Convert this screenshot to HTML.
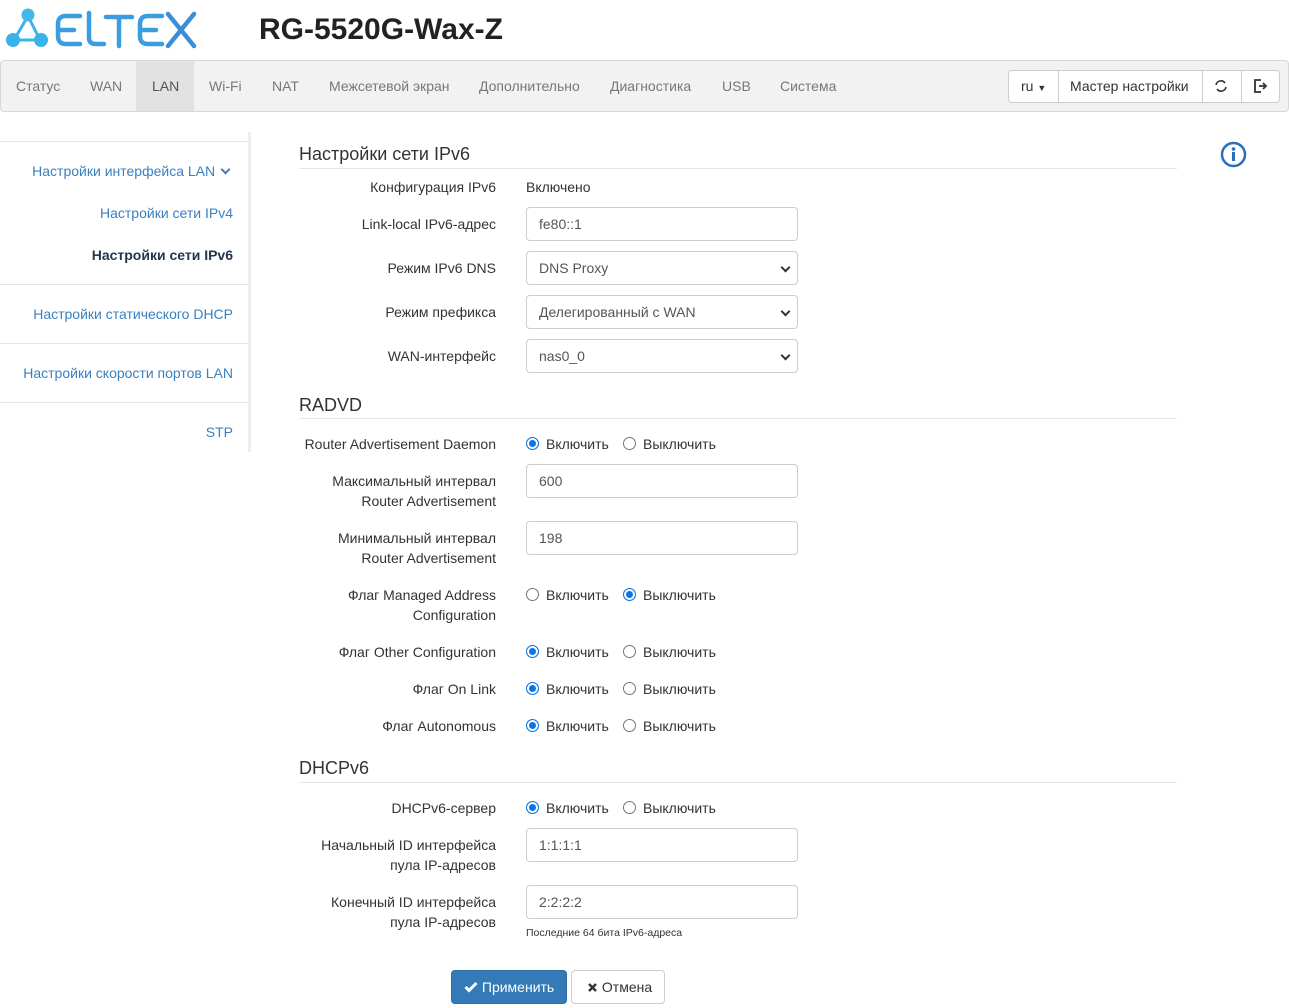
<!DOCTYPE html>
<html><head><meta charset="utf-8">
<style>
*{margin:0;padding:0;box-sizing:border-box}
body{width:1289px;height:1008px;background:#fff;font-family:"Liberation Sans",Arial,sans-serif;font-size:14px;color:#333;position:relative;overflow:hidden}
.a{position:absolute;white-space:nowrap}
.nav{position:absolute;left:0;top:60px;width:1289px;height:52px;background:#f2f2f2;border:1px solid #d8d8d8;border-radius:4px}
.ni{position:absolute;top:17px;color:#777;font-size:14px}
.lbl{position:absolute;right:793px;text-align:right;color:#333;line-height:20px}
.inp{position:absolute;left:526px;width:272px;height:34px;border:1px solid #ccc;border-radius:4px;padding:0 12px;line-height:32px;color:#555;background:#fff}
.sel::after{content:"";position:absolute;right:8px;top:12px;width:5px;height:5px;border-right:2px solid #333;border-bottom:2px solid #333;transform:rotate(45deg)}
.h{position:absolute;left:299px;font-size:18px;color:#333}
.hl{position:absolute;left:299px;width:878px;height:1px;background:#e5e5e5}
.r{position:absolute;width:13px;height:13px;border:1px solid #767676;border-radius:50%;background:#fff}
.r.on{border:1px solid #0a75e8;background:#0a75e8;box-shadow:inset 0 0 0 2px #fff}
.rt{position:absolute;color:#333}
.sb{position:absolute;right:1056px;color:#3a7fc1;text-align:right}
.sl{position:absolute;left:0;width:248px;height:1px;background:#e5e5e5}
</style></head><body>
<svg class="a" style="left:0;top:0" width="200" height="56" viewBox="0 0 200 56">
<g stroke="#3bb3e8" stroke-width="3" fill="none"><line x1="28" y1="16" x2="14" y2="40"/><line x1="28" y1="16" x2="40" y2="40"/><line x1="14" y1="40" x2="40" y2="40"/></g>
<circle cx="28" cy="15" r="6.5" fill="#45b8ea"/><circle cx="13" cy="40" r="7" fill="#3bb3e8"/><circle cx="41" cy="40" r="7" fill="#3bb3e8"/>
<g stroke="#3a9ddf" stroke-width="4.5" fill="none" stroke-linecap="round">
<path d="M80 16 H66 Q58 16 58 24 V36 Q58 44 66 44 H80 M58 30 H74"/>
<path d="M89 13 V38 Q89 44 96 44 H104"/>
<path d="M106 17 H132 M119 17 V46"/>
<path d="M162 16 H148 Q140 16 140 24 V36 Q140 44 148 44 H162 M140 30 H156"/>
<path d="M168 14 L194 46 M194 14 L168 46" stroke="#3a8ed8"/>
</g></svg>
<div class="a" style="left:259px;top:13px;font-size:30px;font-weight:bold;color:#222">RG-5520G-Wax-Z</div>
<div class="nav">
<div class="a" style="left:135px;top:0;width:58px;height:50px;background:#e2e2e2"></div>
<span class="ni" style="left:15px">Статус</span><span class="ni" style="left:89px">WAN</span><span class="ni" style="left:151px;color:#555">LAN</span><span class="ni" style="left:208px">Wi-Fi</span><span class="ni" style="left:271px">NAT</span><span class="ni" style="left:328px">Межсетевой экран</span><span class="ni" style="left:478px">Дополнительно</span><span class="ni" style="left:609px">Диагностика</span><span class="ni" style="left:721px">USB</span><span class="ni" style="left:779px">Система</span>
<div class="a" style="left:1007px;top:9px;width:272px;height:33px;border:1px solid #ccc;border-radius:4px;background:#fff"></div>
<div class="a" style="left:1057px;top:9px;width:1px;height:33px;background:#ccc"></div>
<div class="a" style="left:1201px;top:9px;width:1px;height:33px;background:#ccc"></div>
<div class="a" style="left:1240px;top:9px;width:1px;height:33px;background:#ccc"></div>
<span class="a" style="left:1020px;top:17px;color:#333">ru <span style="font-size:9px">▼</span></span>
<span class="a" style="left:1069px;top:17px;color:#333">Мастер настройки</span>
<svg class="a" style="left:1213px;top:18px" width="14" height="14" viewBox="0 0 14 14"><path d="M2 6 A5 5 0 0 1 11 4 M12 8 A5 5 0 0 1 3 10" stroke="#333" stroke-width="1.6" fill="none"/></svg>
<svg class="a" style="left:1252px;top:17px" width="16" height="16" viewBox="0 0 16 16"><path d="M8 2 H2 V14 H8" stroke="#333" stroke-width="1.8" fill="none"/><path d="M6 8 H12 M10 5 L13 8 L10 11" stroke="#333" stroke-width="1.8" fill="none"/></svg>
</div>
<div class="sl" style="top:141px"></div><div class="sl" style="top:284px"></div><div class="sl" style="top:343px"></div><div class="sl" style="top:402px"></div>
<div class="a" style="left:248px;top:132px;width:3px;height:320px;background:#eee"></div>
<span class="sb" style="top:163px">Настройки интерфейса LAN <span style="display:inline-block;width:7px;height:7px;border-right:2.5px solid #3a7fc1;border-bottom:2.5px solid #3a7fc1;transform:rotate(45deg);margin:0 4px 3px 3px"></span></span>
<span class="sb" style="top:205px">Настройки сети IPv4</span>
<span class="sb" style="top:247px;font-weight:bold;color:#23364d">Настройки сети IPv6</span>
<span class="sb" style="top:306px">Настройки статического DHCP</span>
<span class="sb" style="top:365px">Настройки скорости портов LAN</span>
<span class="sb" style="top:424px">STP</span>
<svg class="a" style="left:1220px;top:141px" width="27" height="27" viewBox="0 0 27 27"><circle cx="13.5" cy="13.5" r="11.5" stroke="#2a6fba" stroke-width="2.5" fill="none"/><circle cx="13.5" cy="8" r="1.8" fill="#2a6fba"/><rect x="12" y="11" width="3" height="9" fill="#2a6fba"/></svg>

<div class="h" style="top:144px">Настройки сети IPv6</div><div class="hl" style="top:168px"></div>
<div class="lbl" style="top:177px">Конфигурация IPv6</div><div class="a" style="left:526px;top:177px;line-height:20px">Включено</div>
<div class="lbl" style="top:214px">Link-local IPv6-адрес</div><div class="inp" style="top:207px">fe80::1</div>
<div class="lbl" style="top:258px">Режим IPv6 DNS</div><div class="inp sel" style="top:251px">DNS Proxy</div>
<div class="lbl" style="top:302px">Режим префикса</div><div class="inp sel" style="top:295px">Делегированный с WAN</div>
<div class="lbl" style="top:346px">WAN-интерфейс</div><div class="inp sel" style="top:339px">nas0_0</div>

<div class="h" style="top:395px">RADVD</div><div class="hl" style="top:418px"></div>
<div class="lbl" style="top:434px">Router Advertisement Daemon</div>
<div class="lbl" style="top:471px">Максимальный интервал<br>Router Advertisement</div><div class="inp" style="top:464px">600</div>
<div class="lbl" style="top:528px">Минимальный интервал<br>Router Advertisement</div><div class="inp" style="top:521px">198</div>
<div class="lbl" style="top:585px">Флаг Managed Address<br>Configuration</div>
<div class="lbl" style="top:642px">Флаг Other Configuration</div>
<div class="lbl" style="top:679px">Флаг On Link</div>
<div class="lbl" style="top:716px">Флаг Autonomous</div>

<div class="h" style="top:758px">DHCPv6</div><div class="hl" style="top:782px"></div>
<div class="lbl" style="top:798px">DHCPv6-сервер</div>
<div class="lbl" style="top:835px">Начальный ID интерфейса<br>пула IP-адресов</div><div class="inp" style="top:828px">1:1:1:1</div>
<div class="lbl" style="top:892px">Конечный ID интерфейса<br>пула IP-адресов</div><div class="inp" style="top:885px">2:2:2:2</div>
<div class="a" style="left:526px;top:927px;font-size:10.5px;color:#333">Последние 64 бита IPv6-адреса</div>

<div class="r on" style="left:526px;top:437px"></div><span class="rt" style="left:546px;top:436px">Включить</span><div class="r" style="left:623px;top:437px"></div><span class="rt" style="left:643px;top:436px">Выключить</span>
<div class="r" style="left:526px;top:588px"></div><span class="rt" style="left:546px;top:587px">Включить</span><div class="r on" style="left:623px;top:588px"></div><span class="rt" style="left:643px;top:587px">Выключить</span>
<div class="r on" style="left:526px;top:645px"></div><span class="rt" style="left:546px;top:644px">Включить</span><div class="r" style="left:623px;top:645px"></div><span class="rt" style="left:643px;top:644px">Выключить</span>
<div class="r on" style="left:526px;top:682px"></div><span class="rt" style="left:546px;top:681px">Включить</span><div class="r" style="left:623px;top:682px"></div><span class="rt" style="left:643px;top:681px">Выключить</span>
<div class="r on" style="left:526px;top:719px"></div><span class="rt" style="left:546px;top:718px">Включить</span><div class="r" style="left:623px;top:719px"></div><span class="rt" style="left:643px;top:718px">Выключить</span>
<div class="r on" style="left:526px;top:801px"></div><span class="rt" style="left:546px;top:800px">Включить</span><div class="r" style="left:623px;top:801px"></div><span class="rt" style="left:643px;top:800px">Выключить</span>

<div class="a" style="left:451px;top:970px;width:116px;height:34px;background:#337ab7;border:1px solid #2e6da4;border-radius:4px;color:#fff;line-height:32px;padding-left:12px">
<svg width="14" height="12" viewBox="0 0 14 12" style="vertical-align:-1px"><path d="M1.5 6 L5 9.5 L12.5 2" stroke="#fff" stroke-width="3" fill="none"/></svg> Применить</div>
<div class="a" style="left:571px;top:970px;width:94px;height:34px;background:#fff;border:1px solid #ccc;border-radius:4px;color:#333;line-height:32px;padding-left:15px">
<svg width="11" height="11" viewBox="0 0 11 11" style="vertical-align:-1px"><path d="M2 2 L9 9 M9 2 L2 9" stroke="#333" stroke-width="2.4"/></svg> Отмена</div>
</body></html>
